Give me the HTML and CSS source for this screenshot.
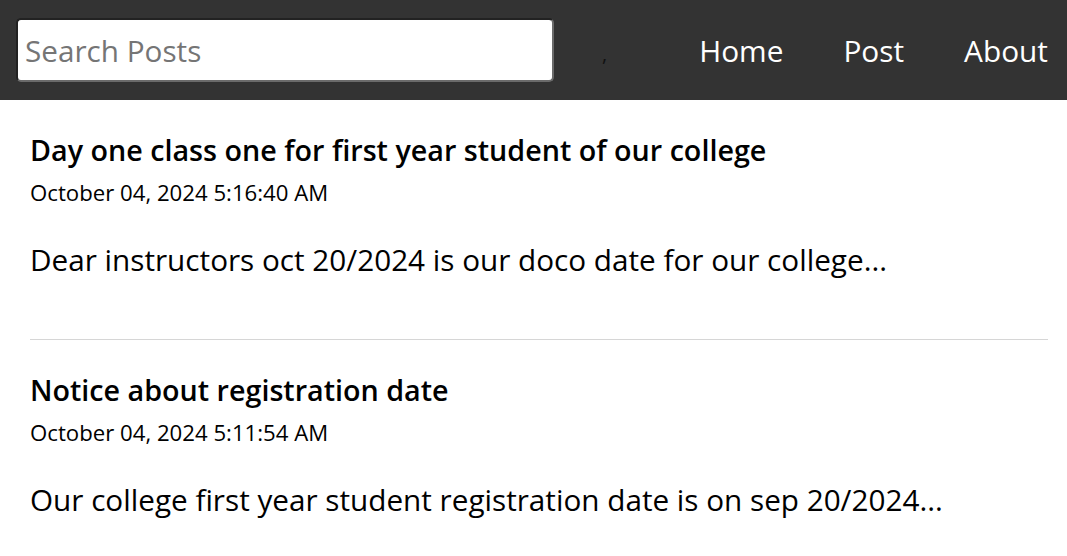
FILE: index.html
```html
<!DOCTYPE html>
<html>
<head>
<meta charset="utf-8">
<link rel="stylesheet" href="styles.css">
</head>
<body>
<header class="topbar">
  <input class="search" type="text" placeholder="Search Posts">
  <span class="user">,</span>
  <nav class="nav">
    <a href="#">Home</a>
    <a href="#">Post</a>
    <a href="#">About</a>
  </nav>
</header>
<main class="posts">
  <article class="post">
    <h2 class="post-title">Day one class one for first year student of our college</h2>
    <div class="post-date">October 04, 2024 5:16:40 AM</div>
    <p class="post-body">Dear instructors oct 20/2024 is our doco date for our college...</p>
  </article>
  <hr class="divider">
  <article class="post">
    <h2 class="post-title">Notice about registration date</h2>
    <div class="post-date">October 04, 2024 5:11:54 AM</div>
    <p class="post-body">Our college first year student registration date is on sep 20/2024...</p>
  </article>
</main>
</body>
</html>
```
FILE: styles.css
```css
* { box-sizing: border-box; }
body {
  margin: 0;
  font-family: "Open Sans", "Noto Sans", sans-serif;
  background: #fff;
  color: #000;
}
.topbar {
  height: 100px;
  background: #333333;
  display: flex;
  align-items: center;
  padding: 0 19px 0 16px;
}
.search {
  width: 538px;
  height: 64px;
  border: 2px solid #6b6b6b;
  border-top-color: #222;
  border-left-color: #222;
  border-radius: 5px;
  background: #fff;
  font-family: inherit;
  font-size: 29.7px;
  padding: 0 7px;
  outline: none;
}
.search::placeholder { color: #757575; }
.user {
  color: #111;
  font-size: 20px;
  margin-left: 48px;
  margin-top: 6px;
}
.nav {
  margin-left: auto;
  display: flex;
  gap: 60px;
}
.nav a {
  color: #fff;
  text-decoration: none;
  font-size: 29.8px;
}
.posts {
  padding: 0 19px 0 30px;
}
.post-title {
  margin: 0;
  padding-top: 30px;
  font-size: 28.7px;
  font-weight: 600;
  line-height: 40px;
}
.post-date {
  font-size: 22.2px;
  line-height: 30px;
  margin-top: 8px;
}
.post-body {
  font-size: 29.7px;
  margin: 32px 0 0;
  line-height: 40px;
  padding-bottom: 59px;
}
.divider {
  border: 0;
  border-top: 1px solid #d6d6d6;
  margin: 0;
}
```
